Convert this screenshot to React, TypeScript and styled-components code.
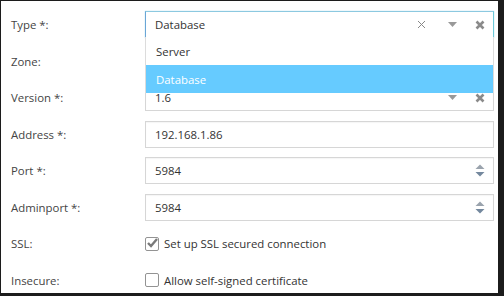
import React from "react";
import styled, { createGlobalStyle } from "styled-components";

const Global = createGlobalStyle`
  html, body { margin: 0; padding: 0; background: #ffffff; }
  body { font-family: "Open Sans", "Noto Sans", sans-serif; }
`;

const Frame = styled.div`
  box-sizing: border-box;
  width: 504px;
  height: 296px;
  border-style: solid;
  border-color: #1c1c1c;
  border-width: 1px 6px 3px 1px;
  background: #fff;
  overflow: hidden;
`;

const Form = styled.div`
  display: grid;
  grid-template-columns: 134px 1fr;
  grid-auto-rows: 27px;
  row-gap: 9.5px;
  padding: 10px 4px 0 10px;
`;

const Label = styled.div`
  display: flex;
  align-items: center;
  font-size: 11.4px;
  color: #444;
`;

const Field = styled.div<{ $focus?: boolean }>`
  position: relative;
  box-sizing: border-box;
  display: flex;
  align-items: center;
  padding: 0 6px 0 9px;
  font-size: 11.4px;
  color: #333;
  background: #fff;
  border: 1px solid ${(p) => (p.$focus ? "#6aa6d6" : "#d6d6d6")};
  ${(p) =>
    p.$focus
      ? "border-top-color: #8cc9e0; border-right-color: #6cc9d8; box-shadow: 0 0 1px #9bd6ea;"
      : "box-shadow: inset 0 1px 1px rgba(0,0,0,0.04);"}
  z-index: ${(p) => (p.$focus ? 2 : 0)};
`;

const Value = styled.span`
  flex: 1;
`;

const Icons = styled.div`
  display: flex;
  align-items: center;
`;

const IconSlot = styled.span<{ $w: number }>`
  display: inline-flex;
  justify-content: center;
  width: ${(p) => p.$w}px;
`;

const Menu = styled.div`
  position: absolute;
  top: 100%;
  left: -1px;
  right: -1px;
  background: #fff;
  border-left: 1px solid #dcdcdc;
  border-right: 1px solid #dcdcdc;
  z-index: 5;
`;

const Option = styled.div<{ $active?: boolean }>`
  height: 28px;
  display: flex;
  align-items: center;
  padding-left: 10px;
  font-size: 11.4px;
  color: ${(p) => (p.$active ? "#fff" : "#333")};
  background: ${(p) => (p.$active ? "#66cbff" : "#fff")};
`;

const CheckRow = styled.label`
  display: flex;
  align-items: center;
  gap: 5px;
  font-size: 11.4px;
  color: #333;
`;

const Box = styled.span`
  box-sizing: border-box;
  width: 14px;
  height: 14px;
  border: 1px solid #939393;
  border-radius: 2px;
  position: relative;
  background: #fff;
`;

const ClearX = () => (
  <svg width="9" height="9" viewBox="0 0 9 9">
    <path d="M1 1 L8 8 M8 1 L1 8" stroke="#888" strokeWidth="1" />
  </svg>
);

const Caret = () => (
  <svg width="9" height="5" viewBox="0 0 9 5">
    <path d="M0 0 H9 L4.5 5 Z" fill="#999" />
  </svg>
);

const BoldX = () => (
  <svg width="10" height="10" viewBox="0 0 10 10">
    <path d="M1.5 1.5 L8.5 8.5 M8.5 1.5 L1.5 8.5" stroke="#8a8a8a" strokeWidth="2.6" />
  </svg>
);

const Spinner = () => (
  <svg width="10" height="13" viewBox="0 0 10 13">
    <path d="M0.5 5 L5 0.5 L9.5 5 Z" fill="#9aa3ad" />
    <path d="M0.5 8 L5 12.5 L9.5 8 Z" fill="#74889e" />
  </svg>
);

const Check = () => (
  <svg width="14" height="14" viewBox="0 0 14 14" style={{ position: "absolute", left: -1, top: -2 }}>
    <path d="M3 7 L6 10 L12 3" stroke="#7a7a7a" strokeWidth="2.4" fill="none" />
  </svg>
);

export default function App() {
  return (
    <>
      <Global />
      <Frame>
        <Form>
          <Label>Type *:</Label>
          <Field $focus>
            <Value>Database</Value>
            <Icons>
              <IconSlot $w={20}><ClearX /></IconSlot>
              <IconSlot $w={42}><Caret /></IconSlot>
              <IconSlot $w={14}><BoldX /></IconSlot>
            </Icons>
            <Menu>
              <Option>Server</Option>
              <Option $active>Database</Option>
            </Menu>
          </Field>

          <Label>Zone:</Label>
          <Field />

          <Label>Version *:</Label>
          <Field>
            <Value>1.6</Value>
            <Icons>
              <IconSlot $w={42}><Caret /></IconSlot>
              <IconSlot $w={14}><BoldX /></IconSlot>
            </Icons>
          </Field>

          <Label>Address *:</Label>
          <Field>
            <Value>192.168.1.86</Value>
          </Field>

          <Label>Port *:</Label>
          <Field>
            <Value>5984</Value>
            <Icons><IconSlot $w={14}><Spinner /></IconSlot></Icons>
          </Field>

          <Label>Adminport *:</Label>
          <Field>
            <Value>5984</Value>
            <Icons><IconSlot $w={14}><Spinner /></IconSlot></Icons>
          </Field>

          <Label>SSL:</Label>
          <CheckRow>
            <Box><Check /></Box>
            Set up SSL secured connection
          </CheckRow>

          <Label>Insecure:</Label>
          <CheckRow>
            <Box />
            Allow self-signed certificate
          </CheckRow>
        </Form>
      </Frame>
    </>
  );
}
